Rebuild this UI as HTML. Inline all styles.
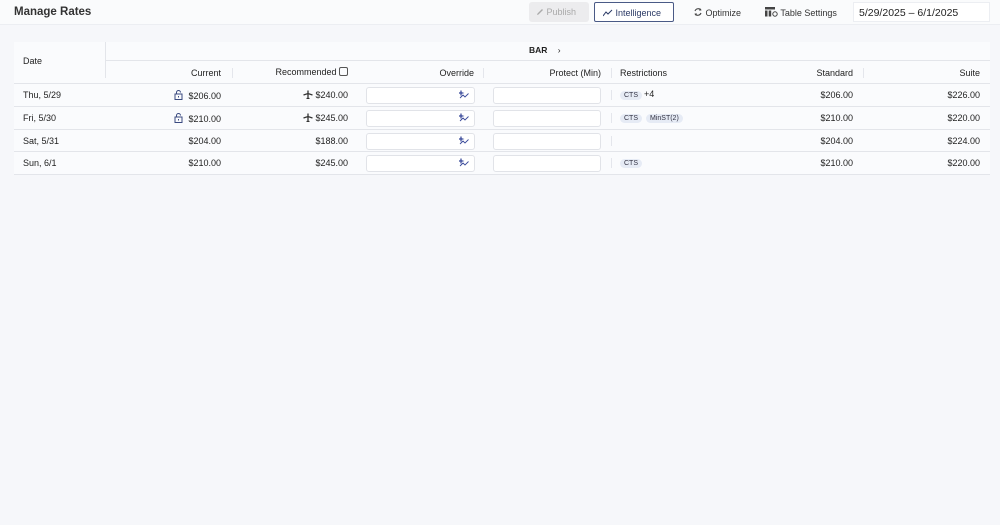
<!DOCTYPE html>
<html><head><style>
*{margin:0;padding:0;box-sizing:border-box}
body{width:1000px;height:525px;background:#f6f7fa;font-family:"Liberation Sans",sans-serif;font-size:9px;color:#222;position:relative;overflow:hidden}
.a{position:absolute;white-space:nowrap}
.r{text-align:right}
.sep{position:absolute;width:1px;height:10px;background:#e4e6ec}
.hl{position:absolute;left:14px;width:976px;height:1px;background:#e3e5ea}
.inp{position:absolute;height:17px;border:1px solid #e1e3e8;border-radius:3px;background:#fff}
.chip{display:inline-block;background:#e6ebf5;border-radius:7px;padding:1px 4px;font-size:7px;color:#334;margin-right:4px}
svg{vertical-align:-1px}
</style></head><body>
<div class="a" style="left:0;top:0;width:1000px;height:25px;background:#fafbfc;border-bottom:1px solid #eceef2"></div>
<div class="a" style="left:14px;top:6px;font-size:11.5px;font-weight:bold;color:#333">Manage Rates</div>
<div class="a" style="left:529px;top:2px;width:60px;height:20px;background:#ececee;border-radius:3px;color:#aaa;padding:5px 0 0 7px"><svg width="8" height="8" viewBox="0 0 8 8"><path d="M1 7L1.5 5.5L6 1L7 2L2.5 6.5Z" fill="#aaa"/></svg> Publish</div>
<div class="a" style="left:594px;top:2px;width:80px;height:20px;border:1px solid #4a5a86;border-radius:2px;background:#fff;color:#2b3a66;padding:5px 0 0 8px"><svg width="10" height="8" viewBox="0 0 10 8"><path d="M0 7L3 3L5 5L9 1" fill="none" stroke="#2b3a66" stroke-width="1"/></svg> Intelligence</div>
<div class="a" style="left:693px;top:7px;color:#333"><svg width="10" height="10" viewBox="0 0 10 10"><path d="M8 3A3.5 3.5 0 0 0 2 4M2 7A3.5 3.5 0 0 0 8 6" fill="none" stroke="#444" stroke-width="1.1"/><path d="M7 1L8.5 3.5L6 3.5Z M3 9L1.5 6.5L4 6.5Z" fill="#444"/></svg> Optimize</div>
<div class="a" style="left:765px;top:7px;color:#333"><svg width="13" height="10" viewBox="0 0 13 10"><rect x="0" y="0" width="10" height="2.5" fill="#444"/><rect x="0" y="3.5" width="2.5" height="6" fill="#444"/><rect x="3.7" y="3.5" width="2.5" height="6" fill="#444"/><circle cx="10" cy="7" r="2.2" fill="none" stroke="#444"/></svg> Table Settings</div>
<div class="a" style="left:853px;top:2px;width:137px;height:20px;background:#fff;border:1px solid #eceef2;font-size:10.5px;padding:4px 0 0 5px;color:#222">5/29/2025 – 6/1/2025</div>

<div class="a" style="left:14px;top:42px;width:976px;height:133px;background:#fafbfd"></div>
<div class="a" style="left:105px;top:42px;width:1px;height:36px;background:#e3e5ea"></div>
<div class="a" style="left:106px;top:60px;width:884px;height:1px;background:#e3e5ea"></div>
<div class="a" style="left:23px;top:56px">Date</div>
<div class="a" style="left:529px;top:45px;font-weight:bold;font-size:8.5px">BAR <span style="font-weight:normal;margin-left:8px">›</span></div>
<div class="a r" style="right:779px;top:68px">Current</div>
<div class="a r" style="right:652px;top:67px">Recommended <span style="display:inline-block;width:9px;height:9px;border:1px solid #555;border-radius:2px;vertical-align:-1px"></span></div>
<div class="a r" style="right:526px;top:68px">Override</div>
<div class="a r" style="right:399px;top:68px">Protect (Min)</div>
<div class="a" style="left:620px;top:68px">Restrictions</div>
<div class="a r" style="right:147px;top:68px">Standard</div>
<div class="a r" style="right:20px;top:68px">Suite</div>
<div class="sep" style="left:232px;top:68px"></div><div class="sep" style="left:483px;top:68px"></div><div class="sep" style="left:611px;top:68px"></div><div class="sep" style="left:863px;top:68px"></div>
<div class="hl" style="top:83px"></div><div class="hl" style="top:106px"></div><div class="hl" style="top:129px"></div><div class="hl" style="top:151px"></div><div class="hl" style="top:174px"></div>

<div class="a" style="left:23px;top:90px">Thu, 5/29</div>
<div class="a" style="left:23px;top:113px">Fri, 5/30</div>
<div class="a" style="left:23px;top:136px">Sat, 5/31</div>
<div class="a" style="left:23px;top:158px">Sun, 6/1</div>

<div class="a r" style="right:779px;top:90px"><svg width="9" height="10" viewBox="0 0 9 10"><path d="M2.5 4V2.5A2 2 0 0 1 6.5 2.5" fill="none" stroke="#3a4a80"/><rect x="1" y="4" width="7" height="5.5" fill="none" stroke="#3a4a80"/><rect x="4" y="6" width="1" height="1.5" fill="#3a4a80"/></svg> &nbsp;$206.00</div>
<div class="a r" style="right:779px;top:113px"><svg width="9" height="10" viewBox="0 0 9 10"><path d="M2.5 4V2.5A2 2 0 0 1 6.5 2.5" fill="none" stroke="#3a4a80"/><rect x="1" y="4" width="7" height="5.5" fill="none" stroke="#3a4a80"/><rect x="4" y="6" width="1" height="1.5" fill="#3a4a80"/></svg> &nbsp;$210.00</div>
<div class="a r" style="right:779px;top:136px">$204.00</div>
<div class="a r" style="right:779px;top:158px">$210.00</div>

<div class="a r" style="right:652px;top:90px"><svg width="10" height="9" viewBox="0 0 10 9"><path d="M5 0.5V8.5M0.5 5L5 3.5L9.5 5M3.5 8.5H6.5" fill="none" stroke="#333" stroke-width="1.3"/></svg> $240.00</div>
<div class="a r" style="right:652px;top:113px"><svg width="10" height="9" viewBox="0 0 10 9"><path d="M5 0.5V8.5M0.5 5L5 3.5L9.5 5M3.5 8.5H6.5" fill="none" stroke="#333" stroke-width="1.3"/></svg> $245.00</div>
<div class="a r" style="right:652px;top:136px">$188.00</div>
<div class="a r" style="right:652px;top:158px">$245.00</div>

<div class="inp" style="left:366px;top:87px;width:109px"></div>
<div class="inp" style="left:366px;top:110px;width:109px"></div>
<div class="inp" style="left:366px;top:133px;width:109px"></div>
<div class="inp" style="left:366px;top:155px;width:109px"></div>
<div class="a" style="left:459px;top:90px"><svg width="10" height="9" viewBox="0 0 10 9"><path d="M1 8L4 5L6 7L9.5 3.5M2 1L2.5 2.5L4 3L2.5 3.5L2 5L1.5 3.5L0 3L1.5 2.5Z" fill="none" stroke="#3a4a9a" stroke-width="0.9"/></svg></div>
<div class="a" style="left:459px;top:113px"><svg width="10" height="9" viewBox="0 0 10 9"><path d="M1 8L4 5L6 7L9.5 3.5M2 1L2.5 2.5L4 3L2.5 3.5L2 5L1.5 3.5L0 3L1.5 2.5Z" fill="none" stroke="#3a4a9a" stroke-width="0.9"/></svg></div>
<div class="a" style="left:459px;top:136px"><svg width="10" height="9" viewBox="0 0 10 9"><path d="M1 8L4 5L6 7L9.5 3.5M2 1L2.5 2.5L4 3L2.5 3.5L2 5L1.5 3.5L0 3L1.5 2.5Z" fill="none" stroke="#3a4a9a" stroke-width="0.9"/></svg></div>
<div class="a" style="left:459px;top:158px"><svg width="10" height="9" viewBox="0 0 10 9"><path d="M1 8L4 5L6 7L9.5 3.5M2 1L2.5 2.5L4 3L2.5 3.5L2 5L1.5 3.5L0 3L1.5 2.5Z" fill="none" stroke="#3a4a9a" stroke-width="0.9"/></svg></div>

<div class="inp" style="left:493px;top:87px;width:108px"></div>
<div class="inp" style="left:493px;top:110px;width:108px"></div>
<div class="inp" style="left:493px;top:133px;width:108px"></div>
<div class="inp" style="left:493px;top:155px;width:108px"></div>

<div class="sep" style="left:611px;top:90px"></div><div class="sep" style="left:611px;top:113px"></div><div class="sep" style="left:611px;top:136px"></div><div class="sep" style="left:611px;top:158px"></div>
<div class="a" style="left:620px;top:89px"><span class="chip">CTS</span><span style="font-size:9px;margin-left:-2px">+4</span></div>
<div class="a" style="left:620px;top:112px"><span class="chip">CTS</span><span class="chip">MinST(2)</span></div>
<div class="a" style="left:620px;top:157px"><span class="chip">CTS</span></div>

<div class="a r" style="right:147px;top:90px">$206.00</div>
<div class="a r" style="right:147px;top:113px">$210.00</div>
<div class="a r" style="right:147px;top:136px">$204.00</div>
<div class="a r" style="right:147px;top:158px">$210.00</div>
<div class="a r" style="right:20px;top:90px">$226.00</div>
<div class="a r" style="right:20px;top:113px">$220.00</div>
<div class="a r" style="right:20px;top:136px">$224.00</div>
<div class="a r" style="right:20px;top:158px">$220.00</div>
</body></html>
